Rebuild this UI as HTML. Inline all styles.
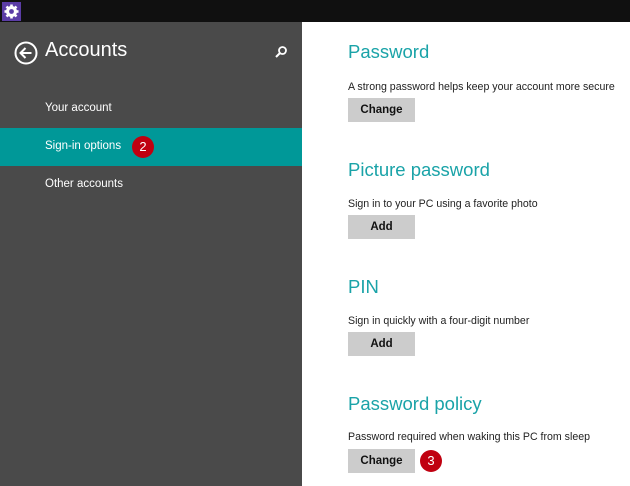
<!DOCTYPE html>
<html><head><style>
*{margin:0;padding:0;box-sizing:border-box}
body{width:630px;height:486px;overflow:hidden;background:#fff;font-family:"Segoe UI","Liberation Sans",sans-serif;position:relative}
.a{position:absolute;white-space:nowrap}
.top{left:0;top:0;width:630px;height:22px;background:#101010}
.left{left:0;top:22px;width:302px;height:464px;background:#4a4a4a}
.sel{left:0;top:128px;width:302px;height:38px;background:#009898}
.nav{color:#fff;font-size:11.5px;left:45px}
.h{color:#1aa3a8;font-size:18.5px;left:348px}
.p{color:#222;font-size:10.6px;left:348px}
.btn{left:348px;width:67px;height:24px;background:#cccccc;color:#111;font-size:11.5px;font-weight:bold;text-align:center;line-height:24px}
.badge{width:22px;height:22px;border-radius:50%;background:#c00010;color:#fff;font-size:13px;text-align:center;line-height:22px}
</style></head><body>
<div class="a top"></div>
<div class="a" style="left:2px;top:2px;width:19px;height:19px;background:#5b3da6">
<svg width="19" height="19" viewBox="0 0 19 19"><g fill="#fff"><circle cx="9.5" cy="9.5" r="5.5"/><g stroke="#fff" stroke-width="2.6"><line x1="9.5" y1="2.5" x2="9.5" y2="16.5"/><line x1="2.5" y1="9.5" x2="16.5" y2="9.5"/><line x1="4.5" y1="4.5" x2="14.5" y2="14.5"/><line x1="14.5" y1="4.5" x2="4.5" y2="14.5"/></g></g><circle cx="9.5" cy="9.5" r="2.4" fill="#5b3da6"/></svg></div>
<div class="a left"></div>
<div class="a sel"></div>
<svg class="a" style="left:14px;top:41px" width="24" height="24" viewBox="0 0 24 24"><circle cx="12" cy="12" r="10.5" fill="none" stroke="#fff" stroke-width="2"/><path d="M6.5 12H17.5M11.5 7L6.5 12L11.5 17" fill="none" stroke="#fff" stroke-width="2"/></svg>
<div class="a" style="left:45px;top:39px;color:#fff;font-size:20px">Accounts</div>
<svg class="a" style="left:274px;top:45px" width="14" height="14" viewBox="0 0 14 14"><circle cx="8.5" cy="5.5" r="3.5" fill="none" stroke="#fff" stroke-width="1.8"/><line x1="6" y1="8" x2="2" y2="12" stroke="#fff" stroke-width="2"/></svg>
<div class="a nav" style="top:102px">Your account</div>
<div class="a nav" style="top:140px">Sign-in options</div>
<div class="a badge" style="left:132px;top:136px">2</div>
<div class="a nav" style="top:178px">Other accounts</div>

<div class="a h" style="top:41px">Password</div>
<div class="a p" style="top:81px">A strong password helps keep your account more secure</div>
<div class="a btn" style="top:98px">Change</div>

<div class="a h" style="top:159px">Picture password</div>
<div class="a p" style="top:198px">Sign in to your PC using a favorite photo</div>
<div class="a btn" style="top:215px">Add</div>

<div class="a h" style="top:276px">PIN</div>
<div class="a p" style="top:315px">Sign in quickly with a four-digit number</div>
<div class="a btn" style="top:332px">Add</div>

<div class="a h" style="top:393px">Password policy</div>
<div class="a p" style="top:431px">Password required when waking this PC from sleep</div>
<div class="a btn" style="top:449px">Change</div>
<div class="a badge" style="left:420px;top:450px">3</div>
</body></html>
